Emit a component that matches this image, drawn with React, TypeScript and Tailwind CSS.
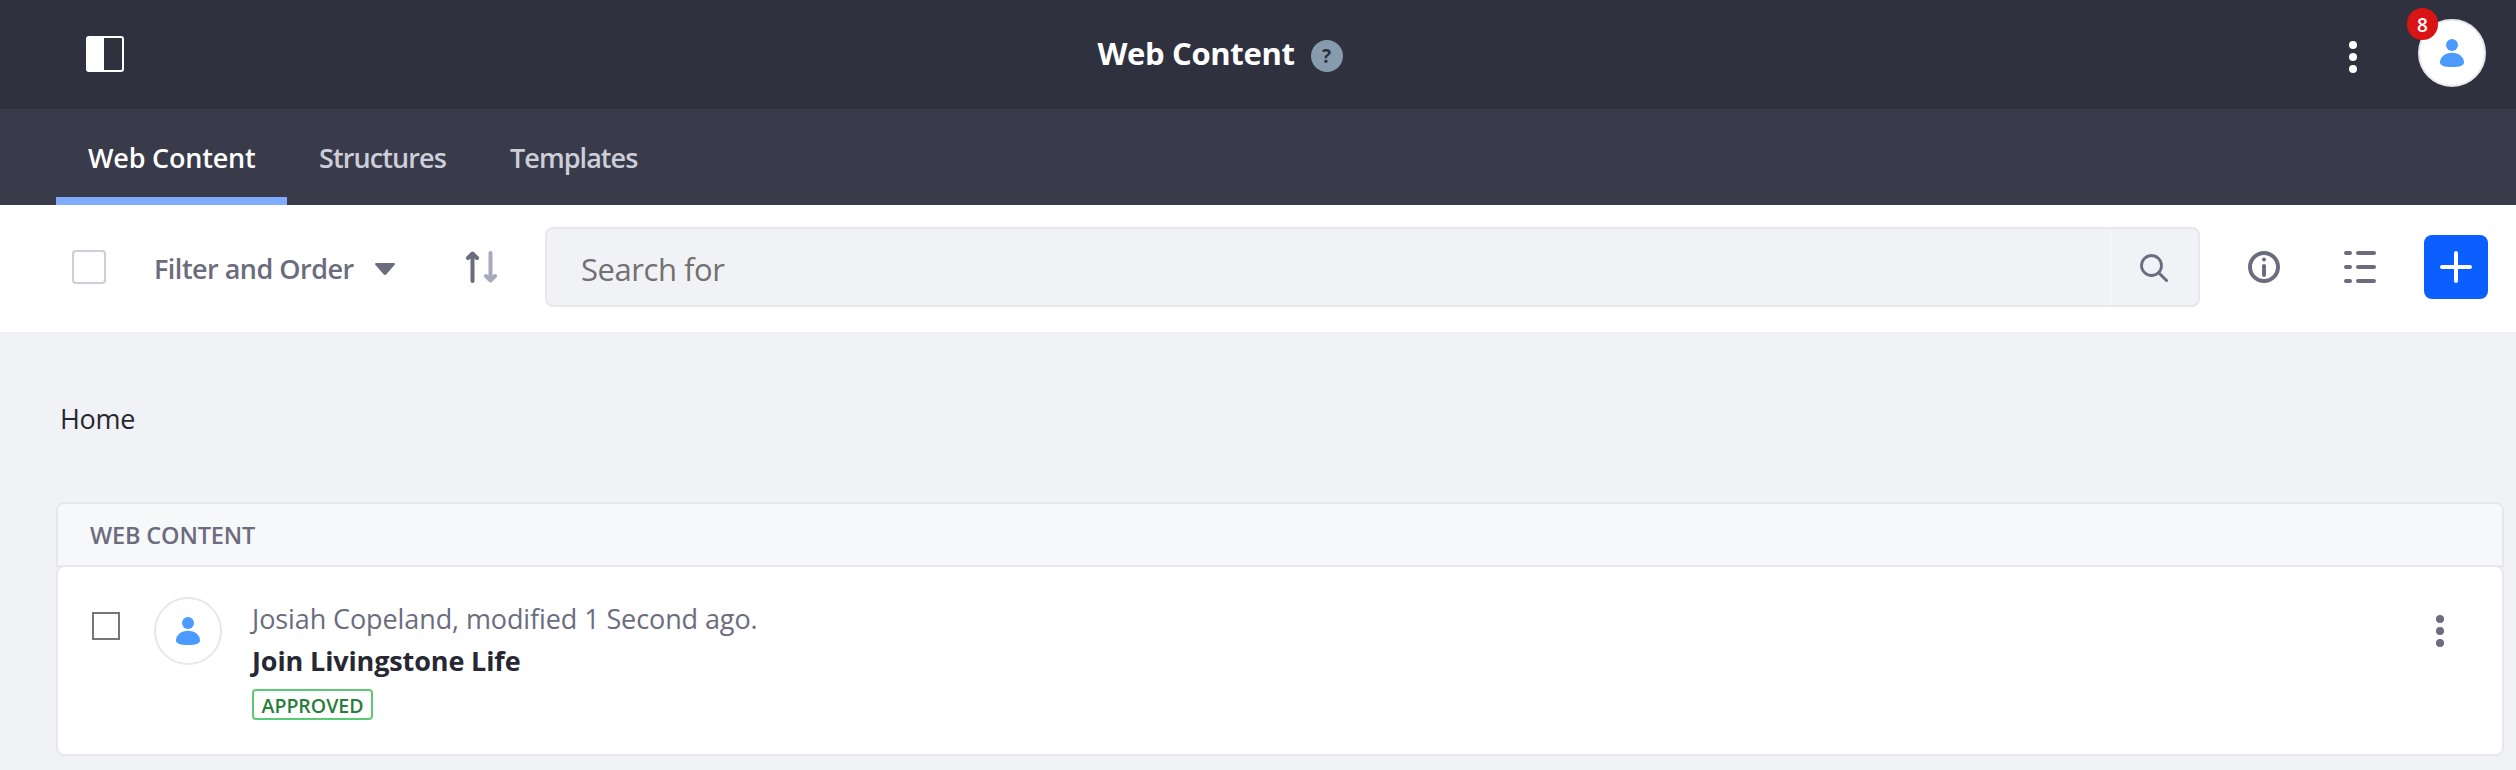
import type { ReactNode } from "react";

function VerticalDots({ className }: { className: string }) {
  return (
    <svg viewBox="0 0 32 32" className={"h-8 w-8 shrink-0 " + className} fill="currentColor">
      <circle cx="16" cy="4" r="4" />
      <circle cx="16" cy="16" r="4" />
      <circle cx="16" cy="28" r="4" />
    </svg>
  );
}

function Avatar() {
  return (
    <div className="flex h-[68px] w-[68px] shrink-0 items-center justify-center rounded-full border-2 border-[#e7e7ed] bg-white">
      <svg viewBox="0 0 24 28" className="h-7 w-6 fill-[#4b9bff]">
        <circle cx="12" cy="6" r="6" />
        <path d="M12 13.8C18.5 13.8 24 18 24 23.2C24 26.8 19.5 28 12 28S0 26.8 0 23.2C0 18 5.500 13.800 12 13.800Z" />
      </svg>
    </div>
  );
}

function Header() {
  return (
    <header className="grid h-[109px] grid-cols-[1fr_auto_1fr] bg-[#30313f] text-white">
      <div className="pt-9 pl-[86px]">
        <div className="flex h-9 w-[38px] rounded-[3px] border-2 border-white">
          <div className="w-4 bg-white" />
        </div>
      </div>
      <div className="-ml-[77px] flex pt-8">
        <h1 className="w-[200px] pt-px pl-px text-[31px] leading-[41px] font-bold tracking-[-0.35px] whitespace-nowrap">
          Web Content
        </h1>
        <div className="mt-2 ml-[14px] flex h-8 w-8 items-center justify-center rounded-full bg-[#869cad]">
          <span className="text-[19px] leading-8 font-bold text-[#30313f]">?</span>
        </div>
      </div>
      <div className="flex justify-end pr-[30px]">
        <VerticalDots className="mt-[41px] mr-[49px]" />
        <div className="relative mt-[19px] h-[68px]">
          <Avatar />
          <span className="absolute -top-[11px] -left-[11px] flex h-8 w-[31px] items-center justify-center rounded-full bg-[#da1414] pt-px text-[19px] leading-8 font-semibold">
            8
          </span>
        </div>
      </div>
    </header>
  );
}

function Tab({ active, children, className }: { active?: boolean; children: ReactNode; className: string }) {
  return (
    <a
      className={
        "border-b-8 px-8 text-[27px] leading-[97px] font-semibold whitespace-nowrap " +
        (active ? "border-[#80acff] text-white " : "border-transparent text-[#cdced9] ") +
        className
      }
    >
      {children}
    </a>
  );
}

function Toolbar() {
  return (
    <div className="flex h-[127px] items-center bg-white pr-7 pb-[3px] pl-[72px] text-[#6b6c7e]">
      <div className="h-[34px] w-[34px] rounded border-2 border-[#cdced9] bg-white" />
      <div className="ml-12 flex w-[241px] items-center">
        <span className="w-[221px] pt-[3px] text-[27px] leading-10 font-semibold tracking-[-0.52px] whitespace-nowrap">
          Filter and Order
        </span>
        <svg viewBox="0 0 20 12" className="mt-1 h-3 w-5 shrink-0" fill="currentColor">
          <path d="M1.500 0H18.500C20 0 20.300 1.200 19.500 2L11.400 11.200C10.500 12.200 9.500 12.200 8.600 11.200L.5 2C-.3 1.200 0 0 1.500 0Z" />
        </svg>
      </div>
      <svg viewBox="0 0 32 32" className="ml-[71px] h-8 w-8 shrink-0" fill="none" strokeWidth="4" strokeLinecap="round" strokeLinejoin="round">
        <path d="M6.500 30V3M2 7L6.500 2.500L11 7" stroke="#6b6c7e" />
        <path d="M24.500 2V29M20 25L24.500 29.500L29 25" stroke="#a7a9bc" />
      </svg>
      <div className="ml-[47px] flex h-20 w-[1655px] shrink-0 rounded-lg border-2 border-[#e7e7ed] bg-[#f1f2f5]">
        <div className="flex-1 pt-px pl-[34px] text-[31px] leading-[78px] tracking-[-0.45px] text-[#717171]">Search for</div>
        <div className="flex w-[88px] items-center justify-center border-l border-[#f7f8f9] pr-[2px]">
          <svg viewBox="0 0 28 28" className="mt-[2px] h-7 w-7" fill="none" stroke="currentColor" strokeLinecap="round">
            <circle cx="11.500" cy="11.500" r="10" strokeWidth="2.800" />
            <path d="M19 19L26.500 26.500" strokeWidth="3" />
          </svg>
        </div>
      </div>
      <svg viewBox="0 0 32 32" className="ml-12 h-8 w-8 shrink-0" fill="none" stroke="currentColor" strokeWidth="4" strokeLinecap="round">
        <circle cx="16" cy="16" r="14" />
        <path d="M16 15V24" />
        <circle cx="16" cy="8.500" r="2" fill="currentColor" stroke="none" />
      </svg>
      <svg viewBox="0 0 32 32" className="ml-16 h-8 w-8 shrink-0" fill="none" stroke="currentColor" strokeWidth="4" strokeLinecap="round">
        <path d="M2 2H6M14 2H30M2 16H6M14 16H30M2 30H6M14 30H30" />
      </svg>
      <button className="ml-12 flex h-16 w-16 shrink-0 items-center justify-center rounded-lg bg-[#0b5fff]">
        <svg viewBox="0 0 32 32" className="h-8 w-8" fill="none" stroke="white" strokeWidth="4" strokeLinecap="round">
          <path d="M16 2V30M2 16H30" />
        </svg>
      </button>
    </div>
  );
}

export default function App() {
  return (
    <div className="h-[770px] w-full overflow-hidden bg-[#f1f2f5] font-['Open_Sans','Noto_Sans',sans-serif] text-[#272833]">
      <Header />
      <nav className="flex h-24 items-stretch overflow-hidden bg-[#393a4a] pl-14">
        <Tab active className="h-24 w-[231px] tracking-[-0.2px]">Web Content</Tab>
        <Tab className="w-[191px] tracking-[-0.9px]">Structures</Tab>
        <Tab className="tracking-[-0.95px]">Templates</Tab>
      </nav>
      <Toolbar />
      <main className="pr-3 pl-14">
        <div className="pt-[67px] pl-1 text-[27px] leading-10 tracking-[-0.3px]">Home</div>
        <div className="mt-[63px] h-[65px] rounded-t-lg border-2 border-[#e7e7ed] bg-[#f7f8f9] pl-8 text-[23.5px] leading-[62px] font-semibold tracking-[-0.15px] text-[#6b6c7e]">
          WEB CONTENT
        </div>
        <div className="relative -mt-[2px] flex h-[191px] items-start rounded-lg border-2 border-[#e7e7ed] bg-white pt-[30px] pr-[46px] pl-[34px]">
          <div className="mt-[15px] mr-[34px] h-7 w-7 shrink-0 border-2 border-[#767676] bg-white" />
          <Avatar />
          <div className="ml-[30px] flex-1 pt-px text-[27px] leading-[42px]">
            <div className="tracking-[-0.1px] text-[#6b6c7e]">Josiah Copeland, modified 1 Second ago.</div>
            <div className="font-bold tracking-[-0.13px]">Join Livingstone Life</div>
            <div className="mt-[7px] flex h-[31px] w-[121px] justify-center rounded border-2 border-[#5aca75] text-[19.5px] leading-[29px] font-semibold text-[#287d3c]">
              APPROVED
            </div>
          </div>
          <VerticalDots className="mt-[18px] text-[#6b6c7e]" />
        </div>
      </main>
    </div>
  );
}
